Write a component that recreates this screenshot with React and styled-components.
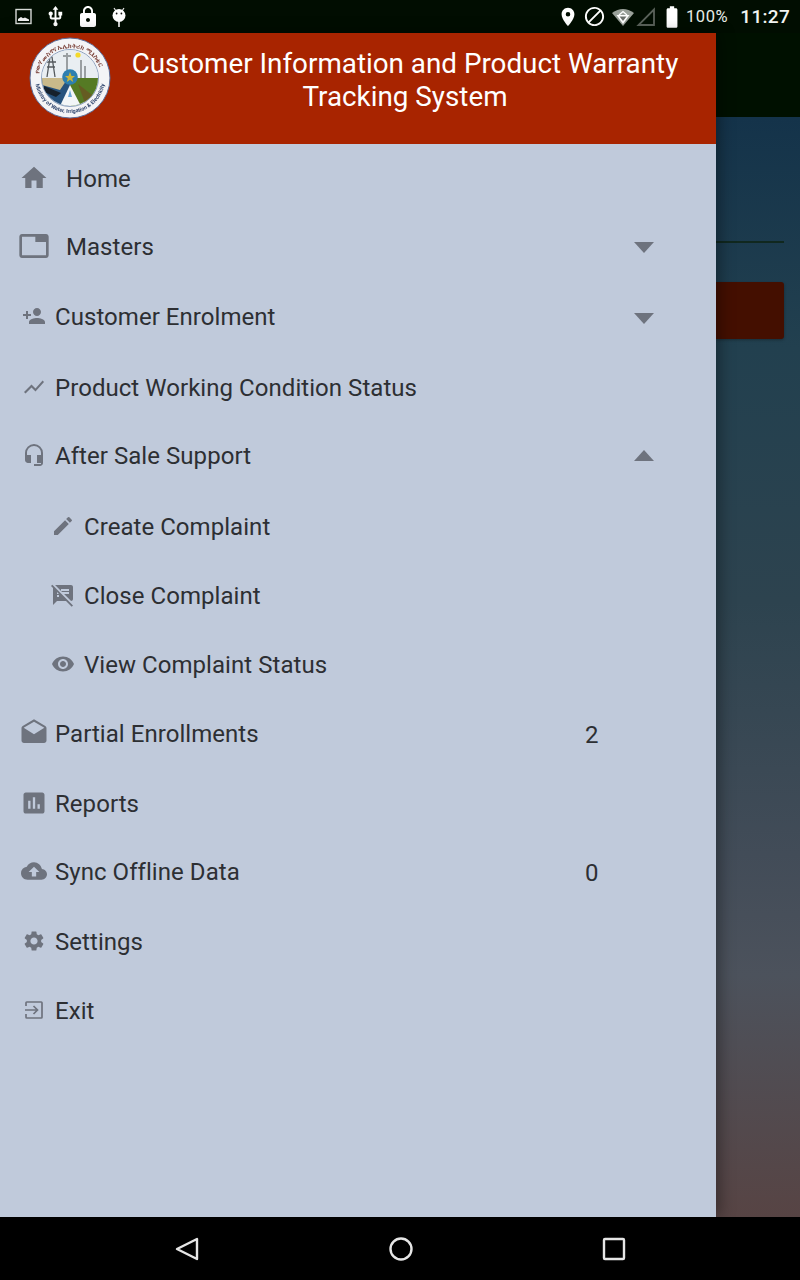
import React from 'react';
import styled, { createGlobalStyle } from 'styled-components';
import {
  MdHome, MdTab, MdPersonAdd, MdShowChart, MdHeadsetMic, MdEdit, MdSpeakerNotesOff,
  MdVisibility, MdDrafts, MdAssessment, MdBackup, MdSettings, MdLocationOn, MdBlock,
  MdBatteryFull, MdLock, MdUsb,
} from 'react-icons/md';

const GlobalStyle = createGlobalStyle`
  html, body { margin: 0; padding: 0; background: #000; }
  body { font-family: Roboto, "Liberation Sans", sans-serif; }
`;

const Screen = styled.div`
  width: 800px;
  height: 1280px;
  display: flex;
  flex-direction: column;
  overflow: hidden;
`;

const StatusBar = styled.div`
  height: 33px;
  flex: none;
  background: #010d01;
  color: #fff;
  display: flex;
  align-items: center;
  justify-content: space-between;
  padding: 0 10px 0 15px;
`;

const StatusGroup = styled.div`
  display: flex;
  align-items: center;
  gap: ${(p) => p.$gap || 0}px;
`;

const BatteryText = styled.span`
  font-size: 16.5px;
  letter-spacing: 0.6px;
  color: #e8ece8;
  margin-left: 1px;
`;

const Clock = styled.span`
  font-size: 19px;
  font-weight: 500;
  letter-spacing: 0.3px;
  margin-left: 12px;
  color: #f2f4f2;
`;

const Body = styled.div`
  flex: 1;
  display: flex;
  min-height: 0;
`;

const Drawer = styled.aside`
  width: 716px;
  flex: none;
  display: flex;
  flex-direction: column;
  background: #c0cadb;
  box-shadow: 4px 0 14px rgba(0, 0, 0, 0.35);
  position: relative;
  z-index: 1;
`;

const DrawerHeader = styled.header`
  height: 111px;
  flex: none;
  background: #a82400;
  display: flex;
  align-items: flex-start;
  padding: 3px 28px 0 28px;
  box-sizing: border-box;
`;

const Title = styled.h1`
  flex: 1;
  margin: 11px 0 0 10px;
  font-size: 27.8px;
  line-height: 33px;
  font-weight: 400;
  color: #fff;
  text-align: center;
`;

const Menu = styled.nav`
  display: flex;
  flex-direction: column;
`;

const Row = styled.div`
  height: 69.33px;
  flex: none;
  box-sizing: border-box;
  display: flex;
  align-items: center;
  padding-left: ${(p) => p.$indent}px;
  padding-top: ${(p) => Math.max(p.$shift, 0) * 2}px;
  padding-bottom: ${(p) => Math.max(-p.$shift, 0) * 2}px;
  color: #6e737e;
  position: relative;
`;

const IconSlot = styled.span`
  width: ${(p) => p.$size}px;
  height: ${(p) => p.$size}px;
  display: flex;
  align-items: center;
  justify-content: center;
  flex: none;
  margin-top: -2px;
`;

const Label = styled.span`
  margin-left: ${(p) => p.$gap}px;
  font-size: 24px;
  letter-spacing: 0.05px;
  color: #2d2f33;
`;

const Count = styled.span`
  position: absolute;
  left: 585px;
  margin-top: 2px;
  font-size: 24px;
  color: #2d2f33;
`;

const Caret = styled.span`
  position: absolute;
  left: 634px;
  width: 0;
  height: 0;
  border-left: 10px solid transparent;
  border-right: 10px solid transparent;
  ${(p) => (p.$up
    ? 'border-bottom: 11px solid #6e737e; margin-top: -1px;'
    : 'border-top: 11px solid #6e737e; margin-top: 2px;')}
`;

const Backdrop = styled.div`
  flex: 1;
  display: flex;
  flex-direction: column;
`;

const BackdropBar = styled.div`
  height: 84px;
  flex: none;
  background: #001000;
`;

const BackdropForm = styled.div`
  flex: 1;
  padding-right: 16px;
  background: linear-gradient(180deg, #14334a 0%, #22404f 21%, #2d434f 44%, #424c58 67%, #4c525c 78%, #574444 100%);
`;

const BackdropLine = styled.div`
  height: 2px;
  margin-top: 124px;
  background: #10281f;
`;

const BackdropButton = styled.div`
  height: 57px;
  margin-top: 39px;
  background: #440f00;
  border-radius: 0 3px 3px 0;
  box-shadow: 0 1px 3px rgba(0, 0, 0, 0.3);
`;

const NavBar = styled.div`
  height: 63px;
  flex: none;
  background: #000;
  display: flex;
  align-items: center;
  padding-left: 174px;
  gap: 187.5px;
`;

const NavIcon = styled.svg`
  width: 26px;
  height: 26px;
  fill: none;
  stroke: #e6e6e6;
  stroke-width: 2.4;
  stroke-linejoin: round;
`;

const LocationIcon = styled(MdLocationOn)`
  margin-right: 4px;
`;

const BatteryIcon = styled(MdBatteryFull)`
  margin-left: 3px;
`;

const WifiSlot = styled.span`
  display: flex;
  margin-left: 5px;
  margin-right: 1px;
`;

const UsbIcon = styled(MdUsb)`
  margin-left: 1px;
  margin-right: -1px;
`;

const Seal = () => (
  <svg width="84" height="84" viewBox="0 0 84 84" style={{ flex: 'none', filter: 'blur(0.4px)' }}>
    <defs>
      <clipPath id="inner"><circle cx="42" cy="42" r="28" /></clipPath>
      <path id="topArc" d="M10 44 A32 32 0 0 1 74 44" />
      <path id="botArc" d="M7 42 A35 35 0 0 0 77 42" />
    </defs>
    <circle cx="42" cy="42" r="40" fill="#f4f4f6" stroke="#5b6f9c" strokeWidth="1" />
    <circle cx="42" cy="42" r="28.5" fill="#e8edf2" stroke="#8fa3c0" strokeWidth="1" />
    <text fontSize="6.5" fontWeight="700" fill="#7a4038" fontFamily="Noto Sans CJK SC, Roboto, sans-serif">
      <textPath href="#topArc" startOffset="6%">የውሃ መስኖና ኤሌክትሪክ ሚኒስቴር</textPath>
    </text>
    <text fontSize="5.4" fontWeight="700" fill="#31466e" fontFamily="Roboto, sans-serif">
      <textPath href="#botArc" startOffset="6%">Ministry of Water, Irrigation &amp; Electricity</textPath>
    </text>
    <g clipPath="url(#inner)">
      <rect x="14" y="14" width="56" height="30" fill="#e9eef2" />
      <circle cx="50" cy="19" r="2.6" fill="#f4d92c" />
      <path d="M19 41 L22 21 L24 21 L27 41 M18 26 H28 M19 31 H27" stroke="#555a5e" strokeWidth="1.3" fill="none" />
      <path d="M39 34 V17 M35 20 H43 M53 42 V24 M57 42 V30" stroke="#9a9fa2" strokeWidth="2" fill="none" />
      <path d="M14 42 H43 L44 70 H14 Z" fill="#27527d" />
      <path d="M14 42 H40 L32 54 L14 49 Z" fill="#c9b98a" />
      <path d="M16 50 L33 57 L28 61 L14 55 Z" fill="#16202c" />
      <path d="M42 42 H70 V70 H42 Z" fill="#557a24" />
      <path d="M50 48 L68 62 V70 H58 Z" fill="#6f4d22" opacity="0.65" />
      <path d="M42 49 L32 70 H53 Z" fill="#f3f6f8" />
      <path d="M42 54 L40 61 H44 Z" fill="#6aa7d8" />
    </g>
    <circle cx="42" cy="41" r="7.8" fill="#2d7fb0" />
    <path d="M42 36 L43.5 40 H47 L44.2 42.4 L45.2 46 L42 43.8 L38.8 46 L39.8 42.4 L37 40 H40.5 Z" fill="#c9b53c" />
  </svg>
);

const ImageStatusIcon = () => (
  <svg width="18" height="18" viewBox="0 0 18 18">
    <rect x="1" y="1.5" width="15" height="14" fill="none" stroke="#d7dbd7" strokeWidth="1.4" />
    <path d="M3 13 V11 L6 9 L8 10.2 L10 9.6 L14 11.5 V13 Z" fill="#f0f0f0" />
  </svg>
);

const AndroidStatusIcon = () => (
  <svg width="18" height="22" viewBox="0 0 18 22">
    <path d="M4 2 L6 5 M14 2 L12 5" stroke="#e8e8e8" strokeWidth="1.2" />
    <circle cx="9" cy="9.5" r="6.5" fill="#fff" />
    <circle cx="6.6" cy="7.5" r="0.9" fill="#111" />
    <circle cx="11.4" cy="7.5" r="0.9" fill="#111" />
    <rect x="8.2" y="15" width="1.6" height="6" fill="#fff" />
  </svg>
);

const WifiStatusIcon = () => (
  <svg width="24" height="20" viewBox="0 0 24 20">
    <path d="M1 6 Q12 -2 23 6 L12 19 Z" fill="#9aa19a" />
    <path d="M5.5 8 H18.5 L12 17 Z" fill="#fff" />
    <path d="M8.5 9.5 H15.5 L12 14 Z" fill="#6b706b" />
    <path d="M8 8 L12 4.5 L16 8" fill="none" stroke="#fff" strokeWidth="1.3" />
  </svg>
);

const SignalStatusIcon = () => (
  <svg width="20" height="20" viewBox="0 0 20 20">
    <path d="M18 2.5 V18 H2.5 Z" fill="none" stroke="#5a625a" strokeWidth="1.8" />
  </svg>
);

const ExitIcon = ({ size }) => (
  <svg width={size} height={size} viewBox="0 0 24 24" fill="none" stroke="currentColor" strokeWidth="1.7">
    <path d="M4 8 V4.8 Q4 4 4.8 4 H19.2 Q20 4 20 4.8 V19.2 Q20 20 19.2 20 H4.8 Q4 20 4 19.2 V16" />
    <path d="M3 12 H15 M11.5 8 L15.5 12 L11.5 16" />
  </svg>
);

const items = [
  { label: 'Home', Icon: MdHome, size: 30, indent: 19, gap: 17, shift: 0 },
  { label: 'Masters', Icon: MdTab, size: 32, indent: 18, gap: 16, caret: 'down', shift: -1 },
  { label: 'Customer Enrolment', Icon: MdPersonAdd, size: 24, indent: 22, gap: 9, caret: 'down', shift: 0 },
  { label: 'Product Working Condition Status', Icon: MdShowChart, size: 24, indent: 22, gap: 9, shift: 1 },
  { label: 'After Sale Support', Icon: MdHeadsetMic, size: 24, indent: 22, gap: 9, caret: 'up', shift: 0 },
  { label: 'Create Complaint', Icon: MdEdit, size: 24, indent: 51, gap: 9, shift: 2 },
  { label: 'Close Complaint', Icon: MdSpeakerNotesOff, size: 24, indent: 51, gap: 9, shift: 1 },
  { label: 'View Complaint Status', Icon: MdVisibility, size: 24, indent: 51, gap: 9, shift: 1 },
  { label: 'Partial Enrollments', Icon: MdDrafts, size: 30, indent: 19, gap: 6, count: 2, shift: 1 },
  { label: 'Reports', Icon: MdAssessment, size: 28, indent: 20, gap: 7, shift: 1 },
  { label: 'Sync Offline Data', Icon: MdBackup, size: 26, indent: 21, gap: 8, count: 0, shift: 0 },
  { label: 'Settings', Icon: MdSettings, size: 24, indent: 22, gap: 9, shift: 1 },
  { label: 'Exit', Icon: ExitIcon, size: 24, indent: 22, gap: 9, shift: 0 },
];

const App = () => {
  return (
    <Screen>
      <GlobalStyle />
      <StatusBar>
        <StatusGroup $gap={10}>
          <ImageStatusIcon />
          <UsbIcon size={23} />
          <MdLock size={24} />
          <AndroidStatusIcon />
        </StatusGroup>
        <StatusGroup>
          <LocationIcon size={22} />
          <MdBlock size={23} />
          <WifiSlot><WifiStatusIcon /></WifiSlot>
          <SignalStatusIcon />
          <BatteryIcon size={26} />
          <BatteryText>100%</BatteryText>
          <Clock>11:27</Clock>
        </StatusGroup>
      </StatusBar>
      <Body>
        <Drawer>
          <DrawerHeader>
            <Seal />
            <Title>Customer Information and Product Warranty Tracking System</Title>
          </DrawerHeader>
          <Menu>
            {items.map(({ label, Icon, size, indent, gap, caret, count, shift }) => (
              <Row key={label} $indent={indent} $shift={shift}>
                <IconSlot $size={size}><Icon size={size} /></IconSlot>
                <Label $gap={gap}>{label}</Label>
                {count !== undefined && <Count>{count}</Count>}
                {caret && <Caret $up={caret === 'up'} />}
              </Row>
            ))}
          </Menu>
        </Drawer>
        <Backdrop>
          <BackdropBar />
          <BackdropForm>
            <BackdropLine />
            <BackdropButton />
          </BackdropForm>
        </Backdrop>
      </Body>
      <NavBar>
        <NavIcon viewBox="0 0 26 26"><path d="M23 3 V23 L3 13 Z" /></NavIcon>
        <NavIcon viewBox="0 0 26 26"><circle cx="13" cy="13" r="10.5" /></NavIcon>
        <NavIcon viewBox="0 0 26 26"><rect x="3" y="3" width="20" height="20" rx="1" /></NavIcon>
      </NavBar>
    </Screen>
  );
};

export default App;
